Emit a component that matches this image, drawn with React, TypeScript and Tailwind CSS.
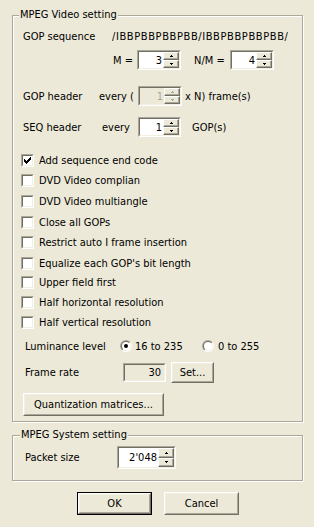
import React from "react";

function Sunken({ className, inner, children }: { className: string; inner: string; children?: React.ReactNode }) {
  return (
    <div className={"border border-t-[#ACA899] border-l-[#ACA899] border-r-white border-b-white " + className}>
      <div className={"h-full border border-t-[#716F64] border-l-[#716F64] border-r-[#F1EFE2] border-b-[#F1EFE2] flex " + inner}>
        {children}
      </div>
    </div>
  );
}

function Arrow({ up, disabled }: { up?: boolean; disabled?: boolean }) {
  const c = disabled ? "#ACA899" : "#000";
  return (
    <div className="flex-1 flex items-center justify-center border border-t-white border-l-white border-r-[#716F64] border-b-[#716F64] bg-[#ECE9D8] shadow-[inset_-1px_-1px_0_#ACA899]">
      <svg width="3" height="2" viewBox="0 0 3 2" shapeRendering="crispEdges">
        {up ? (
          <>
            <rect x="1" y="0" width="1" height="1" fill={c} />
            <rect x="0" y="1" width="3" height="1" fill={c} />
          </>
        ) : (
          <>
            <rect x="0" y="0" width="3" height="1" fill={c} />
            <rect x="1" y="1" width="1" height="1" fill={c} />
          </>
        )}
      </svg>
    </div>
  );
}

function Spin({ size, value, disabled }: { size: string; value: string; disabled?: boolean }) {
  return (
    <Sunken className={size} inner={disabled ? "bg-[#ECE9D8]" : "bg-white"}>
      <div className={"flex-1 flex items-center justify-end pr-[1px] " + (disabled ? "text-[#ACA899]" : "")}>{value}</div>
      <div className="w-[16px] flex flex-col">
        <Arrow up disabled={disabled} />
        <Arrow disabled={disabled} />
      </div>
    </Sunken>
  );
}

function Button({ size, label, isDefault }: { size: string; label: string; isDefault?: boolean }) {
  const face = (
    <div className="h-full border border-t-white border-l-white border-r-[#716F64] border-b-[#716F64]">
      <div className="h-full flex items-center justify-center border border-t-[#F1EFE2] border-l-[#F1EFE2] border-r-[#ACA899] border-b-[#ACA899]">
        {label}
      </div>
    </div>
  );
  return <div className={size + (isDefault ? " border border-black" : "")}>{face}</div>;
}

function Check({ label, checked, h }: { label: string; checked?: boolean; h: string }) {
  return (
    <div className={"flex items-center pl-[8px] " + h}>
      <Sunken className="w-[13px] h-[13px]" inner="bg-white items-center justify-center">
        {checked && (
          <svg width="7" height="7" viewBox="0 0 7 7" shapeRendering="crispEdges">
            <path d="M0 2 L2 4 L6 0 L7 0 L7 3 L2 7 L0 5 Z" fill="#000" />
          </svg>
        )}
      </Sunken>
      <span className="ml-[5px]">{label}</span>
    </div>
  );
}

function Radio({ checked }: { checked?: boolean }) {
  return (
    <svg width="12" height="12" viewBox="0 0 12 12">
      <defs>
        <linearGradient id="ro" x1="0" y1="0" x2="1" y2="1">
          <stop offset="0.5" stopColor="#ACA899" />
          <stop offset="0.5" stopColor="#FFFFFF" />
        </linearGradient>
        <linearGradient id="ri" x1="0" y1="0" x2="1" y2="1">
          <stop offset="0.5" stopColor="#716F64" />
          <stop offset="0.5" stopColor="#F1EFE2" />
        </linearGradient>
      </defs>
      <circle cx="6" cy="6" r="6" fill="url(#ro)" />
      <circle cx="6" cy="6" r="5" fill="url(#ri)" />
      <circle cx="6" cy="6" r="4" fill="#fff" />
      {checked && <circle cx="6" cy="6" r="2" fill="#000" />}
    </svg>
  );
}

export default function App() {
  return (
    <div className="w-[314px] h-[527px] bg-[#ECE9D8] text-black text-[11px] leading-[13px] font-['DejaVu_Sans_Condensed','Liberation_Sans',sans-serif] overflow-hidden flex flex-col">
      {/* MPEG Video setting */}
      <div className="relative ml-[12px] mt-[15px] w-[291px] h-[407px] shrink-0 border border-[#ACA899] shadow-[inset_1px_1px_0_#fff,1px_1px_0_#fff] flex flex-col">
        <span className="absolute left-[6px] top-[-8px] px-[1px] bg-[#ECE9D8]">MPEG Video setting</span>

        <div className="mt-[12px] h-[16px] flex items-center pl-[10px]">
          <span className="w-[89px]">GOP sequence</span>
          <span className="w-[176px] overflow-hidden whitespace-nowrap tracking-[0.6px]">/IBBPBBPBBPBB/IBBPBBPBBPBB/</span>
        </div>

        <div className="mt-[6px] h-[20px] flex items-center pl-[100px]">
          <span className="w-[24px]">M =</span>
          <Spin size="w-[44px] h-[20px]" value="3" />
          <span className="ml-[13px] w-[36px]">N/M =</span>
          <Spin size="w-[44px] h-[20px]" value="4" />
        </div>

        <div className="mt-[16px] h-[20px] flex items-center pl-[10px]">
          <span className="w-[76px]">GOP header</span>
          <span className="w-[39px]">every (</span>
          <Spin size="w-[44px] h-[20px]" value="1" disabled />
          <span className="ml-[3px]">x N) frame(s)</span>
        </div>

        <div className="mt-[11px] h-[20px] flex items-center pl-[10px]">
          <span className="w-[79px]">SEQ header</span>
          <span className="w-[36px]">every</span>
          <Spin size="w-[43px] h-[20px]" value="1" />
          <span className="ml-[11px]">GOP(s)</span>
        </div>

        <div className="mt-[13px] flex flex-col">
          <Check h="h-[20px]" label="Add sequence end code" checked />
          <Check h="h-[21px]" label="DVD Video complian" />
          <Check h="h-[21px]" label="DVD Video multiangle" />
          <Check h="h-[20px]" label="Close all GOPs" />
          <Check h="h-[21px]" label="Restrict auto I frame insertion" />
          <Check h="h-[20px]" label="Equalize each GOP's bit length" />
          <Check h="h-[19px]" label="Upper field first" />
          <Check h="h-[20px]" label="Half horizontal resolution" />
          <Check h="h-[20px]" label="Half vertical resolution" />
        </div>

        <div className="mt-[6px] h-[16px] flex items-center pl-[12px]">
          <span className="w-[95px]">Luminance level</span>
          <Radio checked />
          <span className="ml-[3px] w-[67px]">16 to 235</span>
          <Radio />
          <span className="ml-[4px]">0 to 255</span>
        </div>

        <div className="mt-[8px] h-[21px] flex items-center pl-[12px]">
          <span className="w-[98px]">Frame rate</span>
          <Sunken className="w-[43px] h-[19px]" inner="bg-[#ECE9D8] items-center justify-end pr-[3px]">
            30
          </Sunken>
          <div className="ml-[5px]">
            <Button size="w-[43px] h-[21px]" label="Set..." />
          </div>
        </div>

        <div className="mt-[10px] pl-[10px]">
          <Button size="w-[141px] h-[23px]" label="Quantization matrices..." />
        </div>
      </div>

      {/* MPEG System setting */}
      <div className="relative ml-[12px] mt-[13px] w-[291px] h-[46px] shrink-0 border border-[#ACA899] shadow-[inset_1px_1px_0_#fff,1px_1px_0_#fff] flex flex-col">
        <span className="absolute left-[7px] top-[-8px] px-[1px] bg-[#ECE9D8]">MPEG System setting</span>
        <div className="mt-[10px] h-[23px] flex items-center pl-[12px]">
          <span className="w-[92px]">Packet size</span>
          <Spin size="w-[59px] h-[23px]" value="2'048" />
        </div>
      </div>

      <div className="mt-[11px] flex gap-[12px] pl-[77px]">
        <Button size="w-[75px] h-[23px]" label="OK" isDefault />
        <Button size="w-[75px] h-[23px]" label="Cancel" />
      </div>
    </div>
  );
}
